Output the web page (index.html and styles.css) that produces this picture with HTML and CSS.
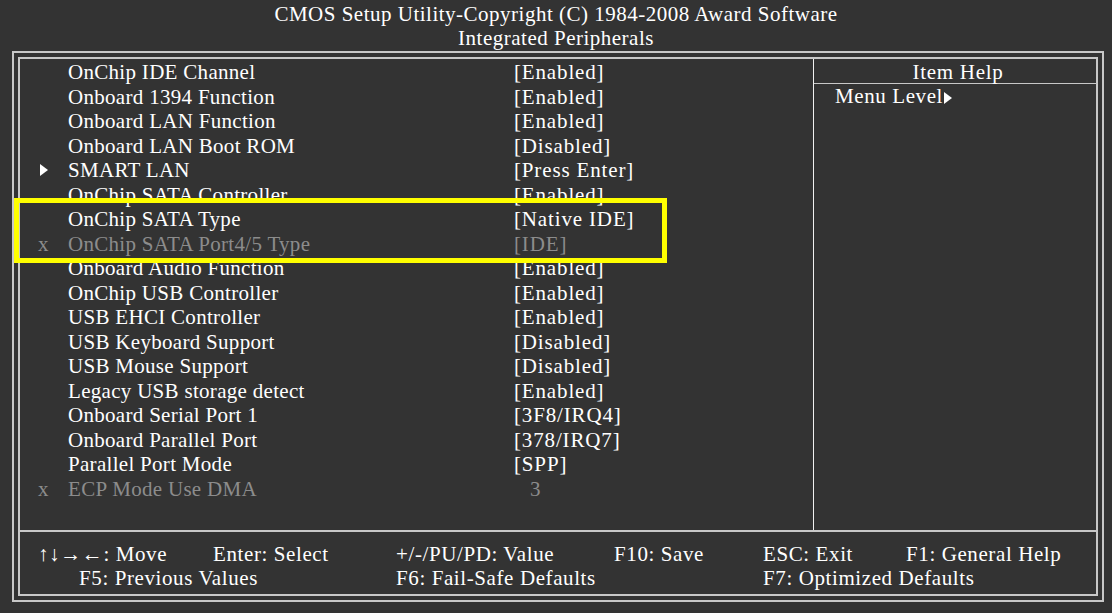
FILE: index.html
```html
<!DOCTYPE html>
<html lang="en">
<head>
  <meta charset="UTF-8">
  <title>CMOS Setup Utility</title>
  <link rel="stylesheet" href="styles.css">
</head>
<body>
  <div class="header">
    <div>CMOS Setup Utility-Copyright (C) 1984-2008 Award Software</div>
    <div>Integrated Peripherals</div>
  </div>
  <div class="frame">
    <div class="inner">
      <div class="top">
        <div class="list">
          <div class="row"><span class="mark"></span><span class="label">OnChip IDE Channel</span><span class="value">[Enabled]</span></div>
          <div class="row"><span class="mark"></span><span class="label">Onboard 1394 Function</span><span class="value">[Enabled]</span></div>
          <div class="row"><span class="mark"></span><span class="label">Onboard LAN Function</span><span class="value">[Enabled]</span></div>
          <div class="row"><span class="mark"></span><span class="label">Onboard LAN Boot ROM</span><span class="value">[Disabled]</span></div>
          <div class="row"><span class="mark"><span class="tri"></span></span><span class="label">SMART LAN</span><span class="value">[Press Enter]</span></div>
          <div class="row"><span class="mark"></span><span class="label">OnChip SATA Controller</span><span class="value">[Enabled]</span></div>
          <div class="row"><span class="mark"></span><span class="label">OnChip SATA Type</span><span class="value">[Native IDE]</span></div>
          <div class="row off"><span class="mark">x</span><span class="label">OnChip SATA Port4/5 Type</span><span class="value">[IDE]</span></div>
          <div class="row"><span class="mark"></span><span class="label">Onboard Audio Function</span><span class="value">[Enabled]</span></div>
          <div class="row"><span class="mark"></span><span class="label">OnChip USB Controller</span><span class="value">[Enabled]</span></div>
          <div class="row"><span class="mark"></span><span class="label">USB EHCI Controller</span><span class="value">[Enabled]</span></div>
          <div class="row"><span class="mark"></span><span class="label">USB Keyboard Support</span><span class="value">[Disabled]</span></div>
          <div class="row"><span class="mark"></span><span class="label">USB Mouse Support</span><span class="value">[Disabled]</span></div>
          <div class="row"><span class="mark"></span><span class="label">Legacy USB storage detect</span><span class="value">[Enabled]</span></div>
          <div class="row"><span class="mark"></span><span class="label">Onboard Serial Port 1</span><span class="value">[3F8/IRQ4]</span></div>
          <div class="row"><span class="mark"></span><span class="label">Onboard Parallel Port</span><span class="value">[378/IRQ7]</span></div>
          <div class="row"><span class="mark"></span><span class="label">Parallel Port Mode</span><span class="value">[SPP]</span></div>
          <div class="row off"><span class="mark">x</span><span class="label">ECP Mode Use DMA</span><span class="value num">3</span></div>
        </div>
        <div class="help">
          <div class="help-title">Item Help</div>
          <div class="help-body">Menu Level<span class="tri side"></span></div>
        </div>
      </div>
      <div class="footer">
        <div class="keys first">
          <span class="k1">&uarr;&darr;&rarr;&larr;: Move</span>
          <span class="k2">Enter: Select</span>
          <span class="k3">+/-/PU/PD: Value</span>
          <span class="k4">F10: Save</span>
          <span class="k5">ESC: Exit</span>
          <span>F1: General Help</span>
        </div>
        <div class="keys second">
          <span class="k6">F5: Previous Values</span>
          <span class="k7">F6: Fail-Safe Defaults</span>
          <span>F7: Optimized Defaults</span>
        </div>
      </div>
    </div>
  </div>
  <div class="highlight"></div>
</body>
</html>
```

FILE: styles.css
```css
body {
  margin: 0;
  background: #333333;
  color: #ffffff;
  font-family: "Liberation Serif", "Times New Roman", serif;
  font-size: 21px;
  letter-spacing: 0.3px;
  position: relative;
  width: 1112px;
  height: 613px;
  overflow: hidden;
}
.header {
  text-align: center;
  font-size: 21px;
  letter-spacing: 0.5px;
  line-height: 24px;
  padding-top: 2px;
  height: 51px;
  box-sizing: border-box;
}
.frame {
  margin: 0 8px 0 12px;
  border: 2px solid #c8c8c8;
  padding: 4px;
  height: 551px;
  box-sizing: border-box;
}
.inner {
  border: 2px solid #c8c8c8;
  height: 100%;
  box-sizing: border-box;
  display: flex;
  flex-direction: column;
}
.top {
  display: flex;
  height: 471px;
  border-bottom: 2px solid #c8c8c8;
}
.list {
  width: 793px;
  padding-top: 1px;
  border-right: 1px solid #f0f0f0;
}
.row {
  display: flex;
  height: 24.5px;
  line-height: 24.5px;
  white-space: nowrap;
}
.row.off {
  color: #8c8c8c;
}
.mark {
  width: 48px;
  display: flex;
  align-items: center;
  justify-content: center;
  padding-right: 1px;
  box-sizing: border-box;
}
.label {
  width: 446px;
}
.value {
  letter-spacing: 0.85px;
}
.value.num {
  padding-left: 16px;
}
.tri {
  display: inline-block;
  width: 0;
  height: 0;
  border-top: 6.5px solid transparent;
  border-bottom: 6.5px solid transparent;
  border-left: 8px solid #ffffff;
}
.tri.side {
  margin-left: 1px;
  vertical-align: -1px;
}
.help {
  flex: 1;
}
.help-title {
  text-align: center;
  line-height: 22px;
  padding-top: 2px;
  letter-spacing: 0.7px;
  border-bottom: 1px solid #c8c8c8;
  padding-left: 6px;
}
.help-body {
  line-height: 25px;
  padding-left: 21px;
  letter-spacing: 0.6px;
}
.footer {
  flex: 1;
  padding-top: 10px;
  letter-spacing: 0.6px;
}
.keys {
  display: flex;
  line-height: 24px;
  white-space: nowrap;
}
.first {
  padding-left: 18px;
}
.second {
  padding-left: 59px;
}
.k1 { width: 175px; }
.k2 { width: 183px; }
.k3 { width: 218px; }
.k4 { width: 149px; }
.k5 { width: 143px; }
.k6 { width: 317px; }
.k7 { width: 367px; }
.highlight {
  position: absolute;
  left: 14px;
  top: 198px;
  width: 653px;
  height: 65px;
  border: 5px solid #ffff00;
  box-sizing: border-box;
}
```
